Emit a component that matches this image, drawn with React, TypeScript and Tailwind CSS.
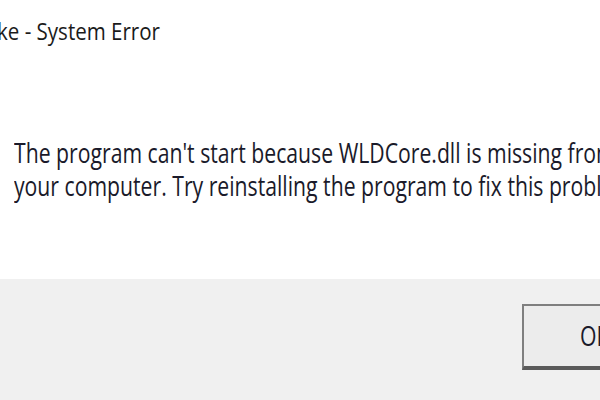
import React from "react";

export default function App() {
  const font = { fontFamily: '"Open Sans", "Noto Sans", sans-serif' };
  return (
    <div className="w-[600px] h-[400px] overflow-hidden flex flex-col bg-white" style={font}>
      <div className="h-[279px] bg-white flex flex-col">
        <div className="pt-[15px] ml-[-3px] whitespace-nowrap text-[24px] leading-[32px] text-[#1b1b1b] origin-left scale-x-[0.855]">
          ke - System Error
        </div>
        <div className="mt-[89px] ml-[14px] whitespace-nowrap text-[27px] leading-[33px] text-[#1a1a2a] origin-left scale-x-[0.785]">
          <div>The program can't start because WLDCore.dll is missing from</div>
          <div>your computer. Try reinstalling the program to fix this problem.</div>
        </div>
      </div>
      <div className="flex-1 bg-[#f0f0f0] flex items-start pt-[25px] pl-[522px]">
        <div className="w-[150px] h-[66px] shrink-0 bg-[#ececec] border-2 border-[#7f7f7f] border-b-[4px] border-b-[#5a5a5a] flex items-center pl-[56px]">
          <span className="text-[27px] text-[#1a1a2a] origin-left scale-x-[0.785]">OK</span>
        </div>
      </div>
    </div>
  );
}
